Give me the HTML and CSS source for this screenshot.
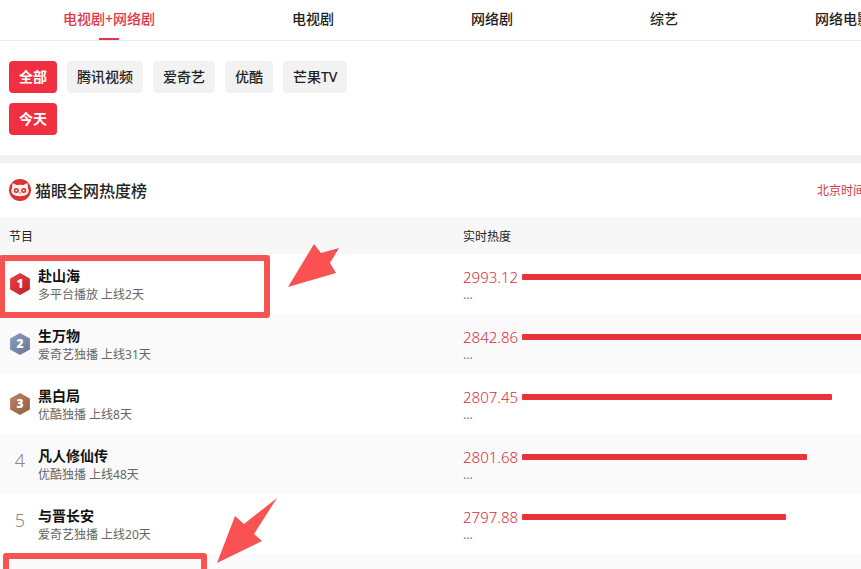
FILE: index.html
```html
<!DOCTYPE html>
<html lang="zh-CN">
<head>
  <meta charset="UTF-8">
  <meta name="viewport" content="width=device-width, initial-scale=1.0">
  <title>猫眼全网热度榜</title>
  <link rel="stylesheet" href="styles.css">
</head>
<body>
  <div class="page">
    <nav class="tabs">
      <a class="tab active" href="#">电视剧+网络剧</a>
      <a class="tab" href="#">电视剧</a>
      <a class="tab" href="#">网络剧</a>
      <a class="tab" href="#">综艺</a>
      <a class="tab" href="#">网络电影</a>
    </nav>

    <div class="filters">
      <div class="filter-row">
        <button type="button" class="chip active">全部</button>
        <button type="button" class="chip">腾讯视频</button>
        <button type="button" class="chip">爱奇艺</button>
        <button type="button" class="chip">优酷</button>
        <button type="button" class="chip">芒果TV</button>
      </div>
      <div class="filter-row">
        <button type="button" class="chip active">今天</button>
      </div>
    </div>

    <div class="board-header">
      <svg class="logo" width="22" height="22" viewBox="0 0 22 22">
        <circle cx="11" cy="11" r="11" fill="#d93236"/>
        <path d="M3.500 4 7.500 6Q11 5.400 14.500 6L18.500 4 19 9Q20.500 12.500 18.500 15 16 17.200 11 17.200T3.500 15Q1.500 12.500 3 9Z" fill="#fff0e5"/>
        <circle cx="7.300" cy="11.500" r="2.500" fill="#c92c31"/>
        <circle cx="14.700" cy="11.500" r="2.500" fill="#c92c31"/>
        <circle cx="7.300" cy="11.500" r="1" fill="#fff0e5"/>
        <circle cx="14.700" cy="11.500" r="1" fill="#fff0e5"/>
        <path d="M10 13.800q1 .8 2 0" fill="none" stroke="#c92c31" stroke-width=".7"/>
      </svg>
      <h1 class="board-title">猫眼全网热度榜</h1>
      <span class="board-time">北京时间</span>
    </div>

    <table class="board">
      <thead>
        <tr>
          <th class="col-show">节目</th>
          <th>实时热度</th>
        </tr>
      </thead>
      <tbody>
        <tr>
          <td>
            <div class="show">
              <span class="rank medal gold">1</span>
              <div>
                <p class="name">赴山海</p>
                <p class="info">多平台播放 上线2天</p>
              </div>
            </div>
          </td>
          <td>
            <div class="heat"><span class="value">2993.12</span><span class="track"><span class="bar" style="width: 100%"></span></span></div>
            <p class="more">...</p>
          </td>
        </tr>
        <tr>
          <td>
            <div class="show">
              <span class="rank medal silver">2</span>
              <div>
                <p class="name">生万物</p>
                <p class="info">爱奇艺独播 上线31天</p>
              </div>
            </div>
          </td>
          <td>
            <div class="heat"><span class="value">2842.86</span><span class="track"><span class="bar" style="width: 100%"></span></span></div>
            <p class="more">...</p>
          </td>
        </tr>
        <tr>
          <td>
            <div class="show">
              <span class="rank medal bronze">3</span>
              <div>
                <p class="name">黑白局</p>
                <p class="info">优酷独播 上线8天</p>
              </div>
            </div>
          </td>
          <td>
            <div class="heat"><span class="value">2807.45</span><span class="track"><span class="bar" style="width: 88%"></span></span></div>
            <p class="more">...</p>
          </td>
        </tr>
        <tr>
          <td>
            <div class="show">
              <span class="rank">4</span>
              <div>
                <p class="name">凡人修仙传</p>
                <p class="info">优酷独播 上线48天</p>
              </div>
            </div>
          </td>
          <td>
            <div class="heat"><span class="value">2801.68</span><span class="track"><span class="bar" style="width: 81%"></span></span></div>
            <p class="more">...</p>
          </td>
        </tr>
        <tr>
          <td>
            <div class="show">
              <span class="rank">5</span>
              <div>
                <p class="name">与晋长安</p>
                <p class="info">爱奇艺独播 上线20天</p>
              </div>
            </div>
          </td>
          <td>
            <div class="heat"><span class="value">2797.88</span><span class="track"><span class="bar" style="width: 75%"></span></span></div>
            <p class="more">...</p>
          </td>
        </tr>
        <tr>
          <td></td>
          <td></td>
        </tr>
      </tbody>
    </table>

    <!-- hand-drawn marks over the list -->
    <div class="mark mark-first"></div>
    <div class="mark mark-sixth"></div>
    <svg class="arrow arrow-first" width="52" height="44" viewBox="0 0 52 44">
      <path d="M0 43 26 0 33 9 51 4 42 19 48 29Z" fill="#fa5252"/>
    </svg>
    <svg class="arrow arrow-sixth" width="62" height="66" viewBox="0 0 62 66">
      <path d="M0 65 18 18 27 26 60 0 37 36 45 43Z" fill="#fa5252"/>
    </svg>
  </div>
</body>
</html>
```
FILE: styles.css
```css
body {
  margin: 0;
  overflow: hidden;
  background: #fff;
  color: #222;
  font-family: "Noto Sans", "Noto Sans CJK SC", sans-serif;
  font-size: 14px;
}

p,
h1 {
  margin: 0;
}

.page {
  position: relative;
  min-width: 874px;
}

.tabs {
  display: flex;
  gap: 137px;
  height: 40px;
  padding-left: 63px;
  border-bottom: 1px solid #eee;
}

.tab {
  display: flex;
  flex-direction: column;
  align-items: center;
  flex-shrink: 0;
  color: #222;
  font-weight: 500;
  line-height: 38px;
  text-decoration: none;
}

.tab.active {
  color: #e0364a;
}

.tab.active::after {
  content: "";
  width: 20px;
  height: 2px;
  background: #e0364a;
}

.filters {
  display: flex;
  flex-direction: column;
  gap: 10px;
  padding: 20px 9px;
  border-bottom: 8px solid #f2f2f2;
}

.filter-row {
  display: flex;
  gap: 10px;
}

.chip {
  height: 32px;
  padding: 0 10px;
  border: none;
  border-radius: 4px;
  background: #f2f2f2;
  color: #222;
  font-family: inherit;
  font-size: 14px;
  font-weight: 500;
  line-height: 32px;
  cursor: pointer;
}

.chip.active {
  background: #f03040;
  color: #fff;
  font-weight: 700;
}

.board-header {
  display: flex;
  align-items: center;
  gap: 4px;
  height: 54px;
  padding: 0 9px;
}

.board-title {
  font-size: 16px;
  font-weight: 500;
}

.board-time {
  margin-left: auto;
  color: #d0384a;
  font-size: 12px;
}

.board {
  width: 100%;
  border-collapse: collapse;
  table-layout: fixed;
}

.board th {
  height: 37px;
  padding: 0 9px;
  background: #f7f7f7;
  font-size: 12px;
  font-weight: 400;
  text-align: left;
}

.col-show {
  width: 436px;
}

.board td {
  box-sizing: border-box;
  height: 60px;
  padding: 2px 0 0 9px;
}

.board tr:nth-child(even) td {
  background: #fafafa;
}

.show {
  display: flex;
  align-items: center;
  gap: 7px;
}

.rank {
  width: 22px;
  margin-bottom: 10px;
  color: #888;
  font-weight: 300;
  font-size: 18px;
  line-height: 22px;
  text-align: center;
}

.medal {
  margin-bottom: 2px;
  clip-path: polygon(50% 0, 95% 25%, 95% 75%, 50% 100%, 5% 75%, 5% 25%);
  color: #fff;
  font-family: "Open Sans", sans-serif;
  font-size: 12px;
  font-weight: 800;
}

.gold {
  background: linear-gradient(135deg, #ee4145, #bd2027);
}

.silver {
  background: linear-gradient(135deg, #8c9dc6, #68758f);
}

.bronze {
  background: linear-gradient(135deg, #c08465, #8f5c40);
}

.name {
  color: #111;
  font-weight: 700;
  line-height: 20px;
}

.info {
  color: #666;
  font-size: 12px;
  line-height: 18px;
}

.heat {
  display: flex;
  align-items: center;
  line-height: 20px;
}

.value {
  width: 59px;
  color: #d82e40;
  font-size: 15px;
  font-weight: 300;
}

.track {
  flex: 1;
}

.bar {
  display: block;
  height: 6px;
  border-radius: 1px;
  background: #e93339;
}

.more {
  color: #777;
  font-size: 12px;
  line-height: 16px;
}

.mark {
  position: absolute;
  box-sizing: border-box;
  border: 6px solid #f65352;
  border-radius: 3px;
}

.mark-first {
  top: 255px;
  left: -1px;
  width: 271px;
  height: 63px;
}

.mark-sixth {
  top: 553px;
  left: 3px;
  width: 204px;
  height: 62px;
}

.arrow {
  position: absolute;
}

.arrow-first {
  top: 244px;
  left: 288px;
}

.arrow-sixth {
  top: 498px;
  left: 217px;
}
```
